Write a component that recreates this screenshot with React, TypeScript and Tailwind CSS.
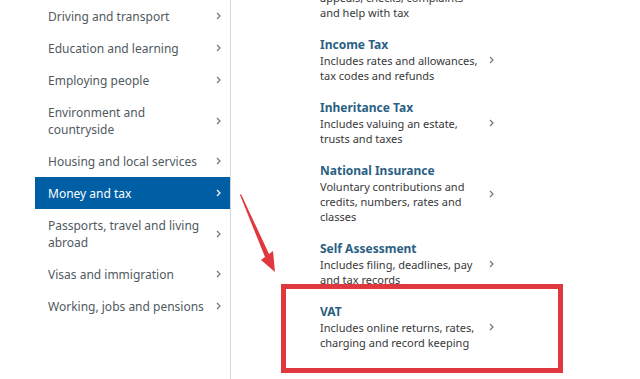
import React from 'react';

interface Topic {
    lines: string[];
    active?: boolean;
}

interface SubTopic {
    title: string;
    lines: string[];
}

const topics: Topic[] = [
    { lines: ['Driving and transport'] },
    { lines: ['Education and learning'] },
    { lines: ['Employing people'] },
    { lines: ['Environment and', 'countryside'] },
    { lines: ['Housing and local services'] },
    { lines: ['Money and tax'], active: true },
    { lines: ['Passports, travel and living', 'abroad'] },
    { lines: ['Visas and immigration'] },
    { lines: ['Working, jobs and pensions'] },
];

const subTopics: SubTopic[] = [
    { title: 'Dealing with HMRC', lines: ['Includes debt and arrears,', 'appeals, checks, complaints', 'and help with tax'] },
    { title: 'Income Tax', lines: ['Includes rates and allowances,', 'tax codes and refunds'] },
    { title: 'Inheritance Tax', lines: ['Includes valuing an estate,', 'trusts and taxes'] },
    { title: 'National Insurance', lines: ['Voluntary contributions and', 'credits, numbers, rates and', 'classes'] },
    { title: 'Self Assessment', lines: ['Includes filing, deadlines, pay', 'and tax records'] },
    { title: 'VAT', lines: ['Includes online returns, rates,', 'charging and record keeping'] },
];

const Chevron = ({ color }: { color: string }) => (
    <svg width="5" height="8" viewBox="0 0 5 8" className="shrink-0">
        <path d="M1 1 L4 4 L1 7" fill="none" stroke={color} strokeWidth="1.2" />
    </svg>
);

const App: React.FC = () => {
    return (
        <div className="relative w-[640px] h-[379px] overflow-hidden bg-white flex font-['Noto_Sans',sans-serif]">
            {/* left menu */}
            <div className="ml-[35px] w-[196px] h-full border-r border-[#d5d8da] flex flex-col">
                {topics.map((t, i) => (
                    <div
                        key={i}
                        className={`flex items-center justify-between pl-[13px] pr-[9px] py-[7.5px] ${t.active ? 'bg-[#005ea5] text-white' : 'text-[#505a5f]'}`}
                    >
                        <div className="text-[12px] leading-[17px]">
                            {t.lines.map((l, j) => (
                                <div key={j}>{l}</div>
                            ))}
                        </div>
                        <Chevron color={t.active ? '#ffffff' : '#6f777b'} />
                    </div>
                ))}
            </div>

            {/* right list */}
            <div className="pl-[89px] mt-[-41px] flex flex-col gap-[17px]">
                {subTopics.map((s, i) => (
                    <div key={i} className="flex items-center">
                        <div className="w-[169px]">
                            <div className="text-[12px] leading-[16px] font-bold text-[#2b5f83]">{s.title}</div>
                            <div className="text-[11px] leading-[15px] text-[#383838]">
                                {s.lines.map((l, j) => (
                                    <div key={j}>{l}</div>
                                ))}
                            </div>
                        </div>
                        <Chevron color="#6f777b" />
                    </div>
                ))}
            </div>

            {/* annotation: red box */}
            <div className="absolute left-[281px] top-[284px] w-[282px] h-[89px] border-[5px] border-[#e0383e]" />

            {/* annotation: arrow */}
            <svg className="absolute left-[236px] top-[192px]" width="46" height="84" viewBox="0 0 46 84">
                <path d="M4 3 L5 2 L33 62 L37 59 L39 80 L25 68 L29 65 Z" fill="#e0383e" />
            </svg>
        </div>
    );
};

export default App;
